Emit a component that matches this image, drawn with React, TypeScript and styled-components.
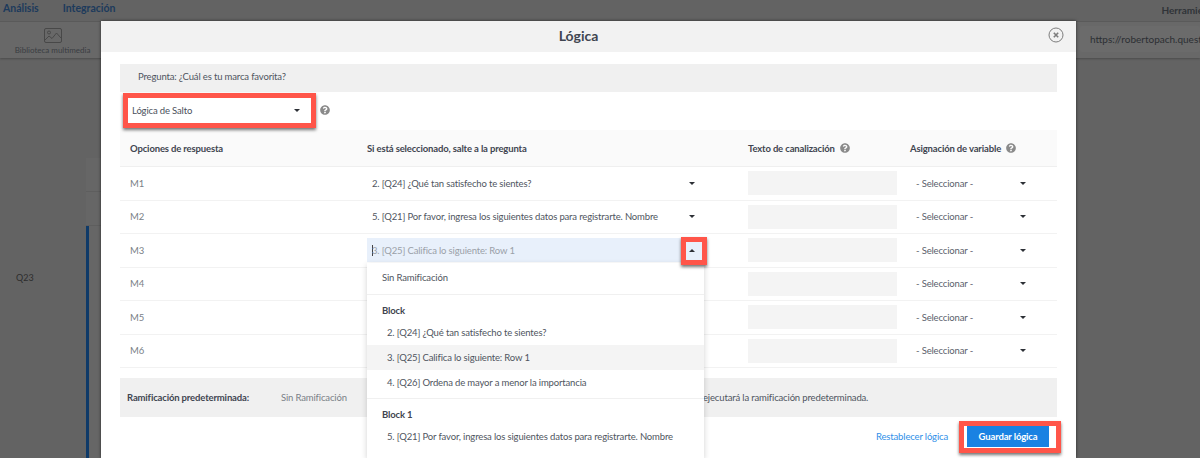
import styled, { createGlobalStyle } from 'styled-components'
import { FaQuestionCircle } from 'react-icons/fa'

const GlobalStyle = createGlobalStyle`
  html, body {
    margin: 0;
    padding: 0;
    height: 458px;
    overflow: hidden;
    background: #636363;
    font-family: Lato, Roboto, sans-serif;
  }
`

const Page = styled.div`
  position: relative;
  width: 1200px;
  height: 458px;
  overflow: hidden;
  background: #636363;
`

const TopNav = styled.nav`
  display: flex;
  align-items: flex-start;
  height: 22px;
  padding: 2px 0 0 3px;
  box-sizing: border-box;
  gap: 24px;
  border-bottom: 1px solid #5c5c5c;
  color: #1c3a5c;
  font-size: 10.5px;
  line-height: 13px;
  font-weight: 700;
`

const NavRight = styled.span`
  margin-left: auto;
  margin-right: -3px;
  padding-top: 2px;
  color: #303338;
  font-size: 10px;
  font-weight: 700;
`

const Toolbar = styled.div`
  display: flex;
  justify-content: space-between;
  height: 36px;
  background: #686868;
  box-shadow: 0 1px 2px rgba(0, 0, 0, 0.25);
`

const MediaTool = styled.div`
  display: flex;
  flex-direction: column;
  align-items: center;
  gap: 2px;
  width: 105px;
  padding-top: 6px;
  color: #3a3d42;
  font-size: 8px;
  line-height: 10px;
`

const UrlBox = styled.div`
  width: 120px;
  height: 26px;
  margin-top: 4px;
  padding-left: 10px;
  box-sizing: border-box;
  line-height: 26px;
  background: #6b6b6b;
  border-radius: 2px;
  color: #2c2f33;
  font-size: 10px;
  white-space: nowrap;
  overflow: hidden;
`

const Canvas = styled.div`
  display: flex;
  height: 400px;
`

const QuestionLabel = styled.div`
  width: 86px;
  padding: 214px 0 0 16px;
  box-sizing: border-box;
  color: #2d2d2d;
  font-size: 9px;
`

const QuestionColumn = styled.div`
  flex: 0 0 15px;
  padding-top: 100px;
`

const StubCard = styled.div`
  height: 33px;
  background: #666;
  border-bottom: 1px solid #5e5e5e;
`

const QuestionAccent = styled.div`
  height: 232px;
  border-left: 3px solid #0f3a68;
  background: #666;
`

const Modal = styled.section`
  position: absolute;
  left: 101px;
  top: 21px;
  width: 975px;
  height: 437px;
  background: #fff;
  box-shadow: 0 0 3px rgba(0, 0, 0, 0.6);
  color: #4f5560;
  font-size: 9.5px;
  letter-spacing: -0.15px;
`

const ModalHeader = styled.header`
  position: relative;
  display: flex;
  align-items: center;
  justify-content: center;
  height: 31px;
  padding: 0 20px 2px 0;
  box-sizing: border-box;
  background: #f2f2f2;
  color: #3f4550;
  font-size: 14px;
  font-weight: 700;
  letter-spacing: 0;
`

const CloseIcon = styled.svg`
  position: absolute;
  right: 12px;
  top: 6px;
  width: 16px;
  height: 16px;
`

const ModalBody = styled.div`
  display: flex;
  flex-direction: column;
  padding: 12px 19px 0;
`

const QuestionBar = styled.div`
  height: 28px;
  padding-left: 18px;
  line-height: 26px;
  background: #f0f0f0;
`

const LogicRow = styled.div`
  display: flex;
  align-items: center;
  height: 38px;
  padding-bottom: 2px;
  box-sizing: border-box;
`

const LogicSelect = styled.div`
  display: flex;
  align-items: center;
  justify-content: space-between;
  width: 181px;
  padding: 0 1px 0 12px;
  box-sizing: border-box;
  color: #4a505b;
`

const Caret = styled.i<{ $up?: boolean }>`
  display: block;
  width: 0;
  height: 0;
  border-left: 3px solid transparent;
  border-right: 3px solid transparent;
  ${(props) =>
    props.$up ? 'border-bottom: 3px solid #2d3036;' : 'border-top: 3px solid #2d3036;'}
`

const HelpIcon = styled(FaQuestionCircle)<{ $left?: number }>`
  width: 10px;
  height: 10px;
  margin-left: ${(props) => props.$left ?? 5}px;
  vertical-align: -1.5px;
  color: #8a8a8a;
`

const Table = styled.div`
  display: flex;
  flex-direction: column;
`

const HeaderRow = styled.div`
  display: grid;
  grid-template-columns: 237px 381px 162px 1fr;
  align-items: center;
  height: 36px;
  padding-left: 10px;
  background: #fafafa;
  border-bottom: 1px solid #efefef;
  color: #3f4550;
  font-weight: 700;
`

const Row = styled.div`
  display: grid;
  grid-template-columns: 237px 381px 162px 1fr;
  align-items: center;
  height: 33.5px;
  box-sizing: border-box;
  padding-left: 10px;
  border-bottom: 1px solid #f2f2f2;
`

const OptionName = styled.span`
  color: #7a7f87;
`

const BranchSelect = styled.div<{ $open?: boolean }>`
  display: flex;
  align-items: center;
  justify-content: space-between;
  width: 337px;
  height: 24px;
  padding: 0 9px 0 5px;
  box-sizing: border-box;
  background: ${(props) => (props.$open ? '#e8f0fb' : 'transparent')};
  color: ${(props) => (props.$open ? '#9aa0a8' : '#4f5560')};
  white-space: nowrap;
`

const TextCursor = styled.span`
  display: inline-block;
  width: 1px;
  height: 11px;
  margin-right: -1px;
  vertical-align: -2px;
  background: #444;
`

const PipeInput = styled.div`
  width: 149px;
  height: 24px;
  background: #f4f4f4;
`

const VariableSelect = styled.div`
  display: flex;
  align-items: center;
  justify-content: space-between;
  width: 110px;
  margin-left: 6px;
  color: #5b616b;
`

const DefaultBar = styled.div`
  display: flex;
  align-items: center;
  height: 39px;
  margin-top: 10px;
  padding-left: 7px;
  background: #f0f0f0;
  white-space: nowrap;
`

const DefaultLabel = styled.span`
  width: 154px;
  color: #3f4550;
  font-weight: 700;
`

const DefaultValue = styled.span`
  width: 310px;
  color: #7a7f87;
`

const DefaultHint = styled.span`
  margin-left: 112px;
`

const Footer = styled.footer`
  display: flex;
  align-items: center;
  justify-content: flex-end;
  gap: 19px;
  height: 38px;
  padding-right: 8px;
`

const ResetLink = styled.a`
  color: #2f8fe8;
`

const SaveButton = styled.button`
  width: 82px;
  height: 22px;
  border: 0;
  background: #1a82e2;
  color: #fff;
  font: inherit;
  letter-spacing: inherit;
  font-weight: 700;
`

const Dropdown = styled.div`
  position: absolute;
  left: 266px;
  top: 242px;
  width: 337px;
  height: 195px;
  overflow: hidden;
  background: #fff;
  box-shadow: 0 2px 6px rgba(0, 0, 0, 0.18);
`

const DropGroup = styled.div`
  padding: 5px 0 3px;
  border-bottom: 1px solid #f0f0f0;
`

const NoBranch = styled.div`
  height: 31px;
  padding-left: 15px;
  line-height: 30px;
  border-bottom: 1px solid #f0f0f0;
`

const GroupTitle = styled.div`
  height: 20px;
  padding-left: 15px;
  line-height: 21px;
  color: #3f4550;
  font-weight: 700;
`

const DropItem = styled.div<{ $active?: boolean }>`
  height: 25px;
  padding-left: 20px;
  line-height: 25px;
  background: ${(props) => (props.$active ? '#f4f4f4' : 'transparent')};
`

const Highlight = styled.div`
  position: absolute;
  box-sizing: border-box;
  border: 5px solid #ff5549;
  box-shadow: 0 2px 3px rgba(0, 0, 0, 0.55);
  pointer-events: none;
`

const SelectHighlight = styled(Highlight)`
  left: 22px;
  top: 72px;
  width: 193px;
  height: 35px;
`

const CaretHighlight = styled(Highlight)`
  left: 580px;
  top: 216px;
  width: 26px;
  height: 28px;
`

const SaveHighlight = styled(Highlight)`
  left: 858px;
  top: 400px;
  width: 102px;
  height: 32px;
`

const options = [
  { name: 'M1', branch: '2. [Q24] ¿Qué tan satisfecho te sientes?' },
  { name: 'M2', branch: '5. [Q21] Por favor, ingresa los siguientes datos para registrarte. Nombre' },
  { name: 'M3', branch: '3. [Q25] Califica lo siguiente: Row 1', open: true },
  { name: 'M4' },
  { name: 'M5' },
  { name: 'M6' },
]

function App() {
  return (
    <Page>
      <GlobalStyle />
      <TopNav>
        <span>Análisis</span>
        <span>Integración</span>
        <NavRight>Herramie</NavRight>
      </TopNav>
      <Toolbar>
        <MediaTool>
          <svg width="18" height="15" viewBox="0 0 18 15" fill="none" stroke="#454545" strokeWidth="0.9">
            <rect x="0.5" y="0.5" width="17" height="14" rx="1.5" />
            <circle cx="5" cy="4.5" r="1.5" />
            <path d="M1 12l4-4 3 2.5L12.5 5 17 10" />
          </svg>
          Biblioteca multimedia
        </MediaTool>
        <UrlBox>https://robertopach.questionpro.com</UrlBox>
      </Toolbar>
      <Canvas>
        <QuestionLabel>Q23</QuestionLabel>
        <QuestionColumn>
          <StubCard />
          <StubCard />
          <QuestionAccent />
        </QuestionColumn>
      </Canvas>

      <Modal>
        <ModalHeader>
          Lógica
          <CloseIcon viewBox="0 0 16 16" fill="none" stroke="#7d7d7d">
            <circle cx="8" cy="8" r="7" strokeWidth="1" />
            <path d="M5.8 5.8l4.4 4.4M10.2 5.8l-4.4 4.4" strokeWidth="1.6" />
          </CloseIcon>
        </ModalHeader>
        <ModalBody>
          <QuestionBar>Pregunta: ¿Cuál es tu marca favorita?</QuestionBar>
          <LogicRow>
            <LogicSelect>
              Lógica de Salto
              <Caret />
            </LogicSelect>
            <HelpIcon $left={19} />
          </LogicRow>
          <Table>
            <HeaderRow>
              <span>Opciones de respuesta</span>
              <span>Si está seleccionado, salte a la pregunta</span>
              <span>
                Texto de canalización
                <HelpIcon />
              </span>
              <span>
                Asignación de variable
                <HelpIcon />
              </span>
            </HeaderRow>
            {options.map((option) => (
              <Row key={option.name}>
                <OptionName>{option.name}</OptionName>
                <div>
                  {option.branch && (
                    <BranchSelect $open={option.open}>
                      <span>
                        {option.open && <TextCursor />}
                        {option.branch}
                      </span>
                      <Caret $up={option.open} />
                    </BranchSelect>
                  )}
                </div>
                <PipeInput />
                <VariableSelect>
                  - Seleccionar -
                  <Caret />
                </VariableSelect>
              </Row>
            ))}
          </Table>
          <DefaultBar>
            <DefaultLabel>Ramificación predeterminada:</DefaultLabel>
            <DefaultValue>Sin Ramificación</DefaultValue>
            <DefaultHint>ejecutará la ramificación predeterminada.</DefaultHint>
          </DefaultBar>
          <Footer>
            <ResetLink>Restablecer lógica</ResetLink>
            <SaveButton>Guardar lógica</SaveButton>
          </Footer>
        </ModalBody>
        <Dropdown>
          <NoBranch>Sin Ramificación</NoBranch>
          <DropGroup>
            <GroupTitle>Block</GroupTitle>
            <DropItem>2. [Q24] ¿Qué tan satisfecho te sientes?</DropItem>
            <DropItem $active>3. [Q25] Califica lo siguiente: Row 1</DropItem>
            <DropItem>4. [Q26] Ordena de mayor a menor la importancia</DropItem>
          </DropGroup>
          <DropGroup>
            <GroupTitle>Block 1</GroupTitle>
            <DropItem>5. [Q21] Por favor, ingresa los siguientes datos para registrarte. Nombre</DropItem>
            <DropItem>6. [Q22] Lo que más te gustó</DropItem>
          </DropGroup>
        </Dropdown>
        <SelectHighlight />
        <CaretHighlight />
        <SaveHighlight />
      </Modal>
    </Page>
  )
}

export default App
